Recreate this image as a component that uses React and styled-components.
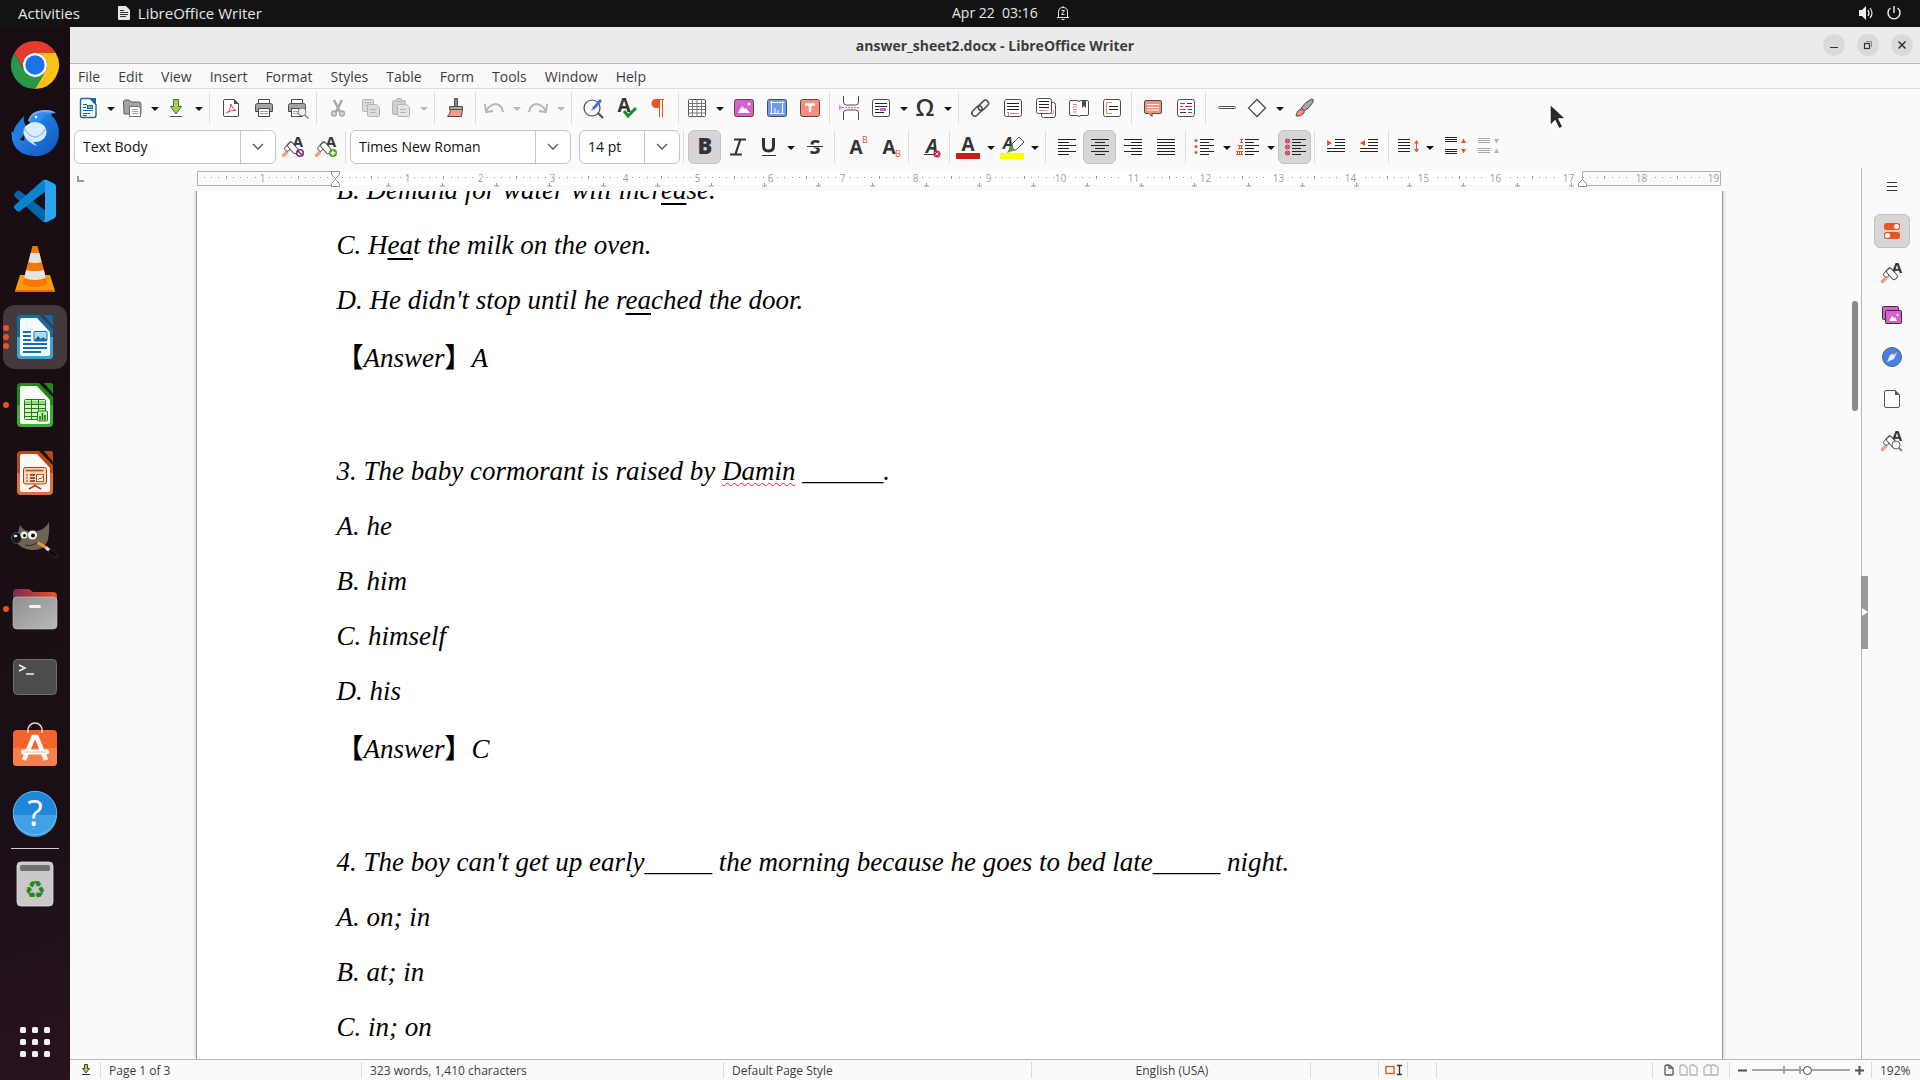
import React, { useState } from "react";
import styled, { createGlobalStyle } from "styled-components";

const ink = "#4d4d4d";
const orange = "#e95420";
const salmon = "#fc9c8c";

export default function App() {
  return (
    <>
      <GlobalStyle />
      <Desktop>
        <TopBar />
        <Workspace>
          <Dock />
          <WriterWindow />
        </Workspace>
        <Pointer viewBox="0 0 20 28">
          <path d="M1 1v22l5-5 4 8 4-2-4-8h7z" fill="#2b2b2b" stroke="#fff" strokeWidth="1.4" />
        </Pointer>
      </Desktop>
    </>
  );
}

function TopBar() {
  return (
    <TopBarWrapper>
      <TopLeft>
        <TopButton>Activities</TopButton>
        <TopButton>
          <svg width="12" height="14" viewBox="0 0 12 14">
            <path d="M0 1q0-1 1-1h7l4 4v9q0 1-1 1H1q-1 0-1-1z" fill="#e6e6e6" />
            <path d="M2 4.500h4M2 6.500h8M2 8.500h8M2 10.500h6" stroke="#333" />
          </svg>
          LibreOffice Writer
        </TopButton>
      </TopLeft>
      <Clock>
        <span>Apr 22&nbsp; 03:16</span>
        <svg width="14" height="16" viewBox="0 0 14 16" fill="none" stroke="#e6e6e6">
          <path d="M1 12.500h12M2.500 12V7q0-4.500 4.500-4.500T11.500 7v5M5.500 14.500h3M7 1v1" />
          <path d="M5.500 5.500h3l-3 4h3" />
        </svg>
      </Clock>
      <TopRight>
        <svg width="16" height="16" viewBox="0 0 16 16">
          <path d="M1 5h3l4-4v14l-4-4H1z" fill="#f2f2f2" />
          <path d="M10 5q2 3 0 6M12 3q4 5 0 10" stroke="#f2f2f2" fill="none" strokeWidth="1.200" />
        </svg>
        <svg width="16" height="16" viewBox="0 0 16 16" fill="none" stroke="#f2f2f2" strokeWidth="1.400">
          <path d="M8 1v7M4.500 3a6 6 0 1 0 7 0" />
        </svg>
      </TopRight>
    </TopBarWrapper>
  );
}

/* ---------- dock ---------- */

const DocIcon = ({ id, dark, light, children }) => (
  <svg width="48" height="48" viewBox="0 0 48 48">
    <defs>
      <linearGradient id={id} x1="0" y1="0" x2="0" y2="1">
        <stop offset="0" stopColor={dark} />
        <stop offset="0.5" stopColor={dark} />
        <stop offset="0.5" stopColor={light} />
        <stop offset="1" stopColor={light} />
      </linearGradient>
    </defs>
    <path d="M10 2h18l14 14v26q0 4-4 4H10q-4 0-4-4V6q0-4 4-4z" fill={`url(#${id})`} />
    <path d="M11 5h15l13 14v22q0 2-2 2H11q-2 0-2-2V7q0-2 2-2z" fill="#fafafa" />
    <path d="M33 2h7q2 0 2 2v9z" fill={dark} />
    {children}
  </svg>
);

const dockIcons = {
  chrome: (
    <svg width="48" height="48" viewBox="0 0 48 48">
      <path d="M24 12h20.800A24 24 0 0 0 3.200 12l10.400 18A12 12 0 0 1 24 12" fill="#e33b2e" />
      <path d="M44.800 12A24 24 0 0 1 24 48l10.400-18A12 12 0 0 0 24 12z" fill="#fbc116" />
      <path d="M3.200 12A24 24 0 0 0 24 48l10.400-18a12 12 0 0 1-20.800 0z" fill="#279847" />
      <circle cx="24" cy="24" r="12" fill="#fff" />
      <circle cx="24" cy="24" r="9.700" fill="#1a73e8" />
    </svg>
  ),
  thunderbird: (
    <svg width="48" height="48" viewBox="0 0 48 48">
      <defs>
        <linearGradient id="tb" x1="0" y1="0" x2="1" y2="1">
          <stop offset="0" stopColor="#2f9bf5" />
          <stop offset="0.6" stopColor="#1b6fd8" />
          <stop offset="1" stopColor="#1552b0" />
        </linearGradient>
      </defs>
      <path d="M0 24q1-2 2 1 1-7 5-11 3-4 6-7-1 4 1 8l3 6-10 12z" fill="#1f7ce0" />
      <path d="M17 12Q20 1 35 1q6 0 10 3-3 0-5 2 8 7 8 18 0 10-7 17-8 7-18 6Q8 46 3 36 0 30 1 22q5 9 12 10 0-12 9-17-2-2-5-3z" fill="url(#tb)" />
      <path d="M17 12Q20 1 35 1q6 0 10 3-11-2-16 5-4 4-12 3z" fill="#8ba4f5" />
      <path d="M19 11q3-8 15-8 4 0 6 2-6 0-9 5-3 5-12 4z" fill="#2b91f0" />
      <circle cx="25" cy="8" r="1.300" fill="#fff" />
      <ellipse cx="24" cy="23" rx="11.500" ry="10" fill="#d9efff" />
      <path d="M13 19q5 9 11 9t11-9" fill="none" stroke="#8fc3f1" strokeWidth="1.400" />
      <path d="M13 26q4 9 14 11-4-2-4-4 9 1 12-8-4 8-11 7-6 0-11-6z" fill="#bfe0fb" />
    </svg>
  ),
  code: (
    <svg width="48" height="48" viewBox="0 0 48 48">
      <path d="M3 17l3-3q1.500-1 3 0l26 20v11q-2 1-4-1L3.500 19.500Q2.500 18 3 17z" fill="#0065a9" />
      <path d="M3 31l3 3q1.500 1 3 0l26-20V3q-2-1-4 1L3.500 28.500Q2.500 30 3 31z" fill="#0a84ce" />
      <path d="M31.500 43.500Q34 46 36 45l7-3.500q2-1 2-3v-29q0-2-2-3L36 3q-2-1-4.500 1.500Q34 3 34 6.500v35q0 3.500-2.500 2z" fill="#27a5f0" />
    </svg>
  ),
  vlc: (
    <svg width="48" height="48" viewBox="0 0 48 48">
      <path d="M9 30h30l5 16H4z" fill="#fb9a0c" />
      <path d="M4 45h40v2H4z" fill="#e06a00" />
      <path d="M21.500 1h5l10 37q-2 4-12.500 4T11.500 38z" fill="#f57900" />
      <path d="M19.700 8h8.600l2.200 9q-6.500 2-13 0z" fill="#e3e5e5" />
      <path d="M15.300 25q8.700 2.500 17.400 0l2.200 8q-10.900 4-21.800 0z" fill="#e3e5e5" />
    </svg>
  ),
  writer: (
    <DocIcon id="dw" dark="#0f6aa5" light="#3fa3da">
      <path d="M12 19h8M12 23h8M12 27h8M12 31h24M12 35h24M12 39h18" stroke="#0f73b5" strokeWidth="1.800" />
      <rect x="23" y="18.500" width="13" height="9.500" rx="1" fill="#a9dcf7" stroke="#0f73b5" />
      <path d="M23 28l4-5 3 3 2-2 4 3v1z" fill="#0f6aa5" />
    </DocIcon>
  ),
  calc: (
    <DocIcon id="dc" dark="#1f8b12" light="#3cad2d">
      <rect x="13.500" y="18.500" width="21" height="20" rx="1" fill="#d2f3c4" stroke="#1f7d12" />
      <path d="M14 20h20v3H14z" fill="#8fdc78" />
      <path d="M13 23.500h22M13 27.500h22M13 31.500h22M13 35.500h22M20.500 18v21M27.500 18v21" stroke="#1f7d12" />
      <rect x="26.500" y="30" width="10" height="10" rx="1" fill="#c4efb2" stroke="#1f7d12" />
      <path d="M29 39v-4M31.500 39v-7M34 39v-5" stroke="#1f7d12" strokeWidth="1.600" />
    </DocIcon>
  ),
  impress: (
    <DocIcon id="di" dark="#b94a10" light="#e0703a">
      <rect x="12.500" y="18.500" width="23" height="16.500" rx="2" fill="#f8d6c3" stroke="#a8410d" />
      <path d="M14.500 21.500h18" stroke="#c9521a" strokeWidth="1.800" />
      <path d="M15 26h2M15 29h2M15 32h2" stroke="#e0703a" strokeWidth="1.600" />
      <path d="M19 26h5M19 29h5M19 32h5" stroke="#7d2f08" strokeWidth="1.600" />
      <rect x="25.500" y="25.500" width="7" height="7" fill="#fff" stroke="#c9521a" />
      <path d="M27 31l2-2 1 1 2-3" stroke="#c9521a" fill="none" />
      <path d="M24 35v2M18 40l5-3h2l5 3" stroke="#a8410d" strokeWidth="1.500" fill="none" />
    </DocIcon>
  ),
  gimp: (
    <svg width="48" height="48" viewBox="0 0 48 48">
      <path d="M9 8q4 7 12 7 13-1 17-10 1 9-1 18-4 11-17 10Q9 32 5 24z" fill="#6b6457" />
      <ellipse cx="5.500" cy="21" rx="5" ry="5.500" fill="#16191c" stroke="#59626a" strokeWidth="0.700" />
      <ellipse cx="4.500" cy="19" rx="1.800" ry="1.300" fill="#e8f0f2" />
      <circle cx="13" cy="18" r="3.500" fill="#e8e8e8" />
      <circle cx="21.500" cy="18" r="4.500" fill="#f2f2f2" />
      <circle cx="13.500" cy="18.500" r="1.500" fill="#111" />
      <circle cx="22" cy="18.500" r="2" fill="#111" />
      <path d="M14 28q7 2 13-3" stroke="#2d2a25" fill="none" />
      <path d="M27 24l10 6-1.500 2.500L26 27z" fill="#f0922b" />
      <path d="M36 29.500l4 3-2 2.500-4-3z" fill="#d6dadb" />
      <path d="M39 32q7 3 8 9-7-1-10-6z" fill="#0a0a0a" stroke="#444" strokeWidth="0.500" />
    </svg>
  ),
  files: (
    <svg width="48" height="48" viewBox="0 0 48 48">
      <defs>
        <linearGradient id="ff" x1="0" x2="1">
          <stop offset="0" stopColor="#7d2954" />
          <stop offset="1" stopColor="#ea5322" />
        </linearGradient>
        <linearGradient id="fg" x1="0" y1="0" x2="1" y2="1">
          <stop offset="0" stopColor="#8f8f8f" />
          <stop offset="1" stopColor="#b9b9b9" />
        </linearGradient>
      </defs>
      <path d="M2 8q0-4 4-4h12l4 3h20q4 0 4 4v14H2z" fill="url(#ff)" />
      <rect x="2" y="12" width="44" height="32" rx="4" fill="url(#fg)" stroke="#c9c9c9" strokeWidth="0.600" />
      <rect x="18" y="20" width="12" height="3" rx="1.500" fill="#f4f4f4" />
    </svg>
  ),
  terminal: (
    <svg width="48" height="48" viewBox="0 0 48 48">
      <rect x="2.500" y="6.500" width="43" height="35" rx="4" fill="#4c4c4c" stroke="#707070" />
      <path d="M8 12l6 3-6 3M15 21h8" stroke="#f2f2f2" strokeWidth="1.500" fill="none" />
    </svg>
  ),
  store: (
    <svg width="48" height="48" viewBox="0 0 48 48">
      <rect x="2" y="9" width="44" height="36" rx="4" fill="#f4642d" />
      <path d="M2 27h44v14q0 4-4 4H6q-4 0-4-4z" fill="#f58049" />
      <path d="M17 12V9a7 7 0 0 1 14 0v3" fill="none" stroke="#f6d9a8" strokeWidth="1.600" />
      <path d="M13 39l9.500-23h3L35 39" stroke="#fff" strokeWidth="4.500" fill="none" />
      <path d="M12.500 31h23" stroke="#fff" strokeWidth="5" strokeLinecap="round" />
      <path d="M13 31h22" stroke="#f9b598" strokeWidth="1" />
    </svg>
  ),
  help: (
    <svg width="48" height="48" viewBox="0 0 48 48">
      <circle cx="24" cy="24" r="22" fill="#1f86d9" />
      <path d="M2 26a22 22 0 0 0 44 0z" fill="#42a1e4" />
      <circle cx="24" cy="24" r="21.700" fill="none" stroke="#7dc1f0" strokeWidth="0.800" />
      <text x="24" y="37" textAnchor="middle" fontFamily="Open Sans, sans-serif" fontSize="36" fill="#fff">?</text>
    </svg>
  ),
  trash: (
    <svg width="48" height="48" viewBox="0 0 48 48">
      <rect x="6" y="2" width="36" height="44" rx="4" fill="#c9c9c9" stroke="#e2e2e2" strokeWidth="0.800" />
      <rect x="9" y="5" width="30" height="6" rx="2" fill="#6f6f6f" />
      <text x="24" y="38" textAnchor="middle" fontFamily="DejaVu Sans, sans-serif" fontSize="24" fill="#228a1c">♻</text>
    </svg>
  ),
};

const dockItems = [
  { name: "Google Chrome", icon: "chrome" },
  { name: "Thunderbird Mail", icon: "thunderbird" },
  { name: "Visual Studio Code", icon: "code" },
  { name: "VLC media player", icon: "vlc" },
  { name: "LibreOffice Writer", icon: "writer", windows: 3, active: true },
  { name: "LibreOffice Calc", icon: "calc", windows: 1 },
  { name: "LibreOffice Impress", icon: "impress" },
  { name: "GIMP", icon: "gimp" },
  { name: "Files", icon: "files", windows: 1 },
  { name: "Terminal", icon: "terminal" },
  { name: "Software", icon: "store" },
  { name: "Help", icon: "help" },
];

function Dock() {
  return (
    <DockWrapper>
      {dockItems.map((item) => (
        <DockButton key={item.name} aria-label={item.name} $active={item.active}>
          {item.windows && (
            <Dots>
              {Array.from({ length: item.windows }, (_, i) => (
                <i key={i} />
              ))}
            </Dots>
          )}
          {dockIcons[item.icon]}
        </DockButton>
      ))}
      <DockLine />
      <DockButton aria-label="Trash">{dockIcons.trash}</DockButton>
      <AppsButton aria-label="Show Applications">
        <svg width="48" height="48" viewBox="0 0 48 48" fill="#f2f2f2">
          {[9, 21, 33].map((y) =>
            [9, 21, 33].map((x) => <rect key={x + "-" + y} x={x} y={y} width="6" height="6" rx="1.500" />)
          )}
        </svg>
      </AppsButton>
    </DockWrapper>
  );
}

/* ---------- toolbar icons, all on a 24px grid ---------- */

const Glyph = ({ x = 12, y = 19, size = 20, fill = "#333", family = "Open Sans", weight = 700, italic, children }) => (
  <text
    x={x}
    y={y}
    textAnchor="middle"
    fontFamily={`${family}, sans-serif`}
    fontSize={size}
    fontWeight={weight}
    fontStyle={italic ? "italic" : "normal"}
    fill={fill}
  >
    {children}
  </text>
);

const Brush = () => (
  <>
    <Glyph x={17} y={12} size={15}>A</Glyph>
    <path d="M2.500 20.500l3-3" stroke={salmon} strokeWidth="3.500" strokeLinecap="round" />
    <rect x="3" y="9" width="10" height="5" rx="1.500" fill="#fff" stroke="#666" transform="rotate(-50 8 11.500)" />
    <rect x="6" y="10" width="12" height="6" rx="2" fill="#fff" stroke={ink} transform="rotate(48 12 13)" />
  </>
);

const box = <rect x="3.500" y="3.500" width="17" height="17" rx="2" fill="#fff" stroke={ink} />;

const Printer = () => (
  <>
    <path d="M6.500 8V3.500h11V8" fill="#fff" stroke={ink} />
    <path d="M3.500 9.500q0-2 2-2h13q2 0 2 2v6h-17z" fill="#a6a6a6" stroke={ink} />
    <rect x="6.500" y="12.500" width="11" height="8" fill="#fff" stroke={ink} />
    <path d="M8 15.500h8M8 17.500h8" stroke="#9a9af0" />
  </>
);

const icons = {
  newDoc: (
    <>
      <path d="M4.500 4.500q0-2 2-2H14l6 6V19q0 2.500-2 2.500H6.500q-2 0-2-2z" fill="#fff" stroke="#0d6ba5" strokeWidth="1.400" />
      <path d="M13 2h7v7z" fill="#0d6ba5" />
      <path d="M7 8.500h4M7 11.500h3M7 14.500h10M7 17.500h7M7 19.500h4" stroke="#0d6ba5" />
      <rect x="11.500" y="9.500" width="5" height="3" fill="#6fb7e0" stroke="#0d6ba5" />
    </>
  ),
  open: (
    <>
      <path d="M3.500 6q0-2 2-2H9l2 2h8q2 0 2 2v10h-17z" fill="#a3a3a3" stroke="#606060" />
      <path d="M9.500 10.500h9l2 2v8h-11z" fill="#fff" stroke="#707070" />
      <path d="M12 13.500h6M12 15.500h6M12 17.500h6" stroke="#9a9af0" />
    </>
  ),
  save: (
    <>
      <path d="M9.500 3.500h5v7h3L12 18l-5.500-7.500h3z" fill="#9fd24a" stroke="#5a6b3a" />
      <path d="M6 20.500h12" stroke={ink} />
    </>
  ),
  pdf: (
    <>
      <path d="M4.500 5q0-1.500 1.500-1.500h9L19.500 8v11q0 1.500-1.500 1.500H6q-1.500 0-1.500-1.500z" fill="#fff" stroke={ink} />
      <path d="M15 3l5 5h-5z" fill={ink} />
      <path d="M7.500 17Q11 15 12 8q1 5 5 6.500-5-1-9.500 2.500z" fill="none" stroke="#e2405c" />
    </>
  ),
  print: <Printer />,
  preview: (
    <>
      <Printer />
      <circle cx="17" cy="16" r="4" fill="#eee" stroke="#808080" />
      <path d="M20 19l3.500 3.500" stroke="#808080" strokeWidth="1.500" />
    </>
  ),
  cut: (
    <g fill="#d0d0d0" stroke="#a8a8a8" strokeWidth="1.300">
      <path d="M8 4l6 12M16 4l-6 12" strokeWidth="2.500" />
      <circle cx="8" cy="17.500" r="2.500" />
      <circle cx="16" cy="17.500" r="2.500" />
    </g>
  ),
  copy: (
    <g fill="#dcdcdc" stroke="#b4b4b4">
      <rect x="3.500" y="3.500" width="11" height="12" rx="1.500" />
      <path d="M6 6.500h6M6 9.500h3" />
      <path d="M8.500 9.500q0-1 1-1h8l3 3v8q0 1-1 1h-10q-1 0-1-1z" />
      <path d="M11 13.500h6M11 16.500h6" />
    </g>
  ),
  paste: (
    <g fill="#cfcfcf" stroke="#b4b4b4">
      <rect x="3.500" y="4.500" width="13" height="14" rx="1.500" />
      <rect x="7.500" y="2.500" width="5" height="3" rx="1" />
      <path d="M8.500 9.500q0-1 1-1h8l3 3v8q0 1-1 1h-10q-1 0-1-1z" fill="#e4e4e4" />
      <path d="M11 13.500h6M11 16.500h6" />
    </g>
  ),
  clone: (
    <>
      <path d="M10.500 2.500h3v8h-3z" fill="#8a8a8a" stroke={ink} />
      <path d="M5.500 10.500h13v3h-13z" fill="#a6a6a6" stroke={ink} />
      <path d="M6.500 13.500h12l-1 7h-14q3-3 3-7z" fill={salmon} stroke={ink} />
    </>
  ),
  undo: <path d="M3 8l1 8 7-1M4 15q4-7 10-7 6 1 7 8" fill="none" stroke="#b8b8b8" strokeWidth="2" />,
  redo: <path d="M21 8l-1 8-7-1M20 15q-4-7-10-7-6 1-7 8" fill="none" stroke="#b8b8b8" strokeWidth="2" />,
  find: (
    <>
      <circle cx="11" cy="12" r="8" fill="#fafafa" stroke={ink} strokeWidth="1.200" />
      <path d="M17 17l5 5" stroke={ink} strokeWidth="2" />
      <path d="M11 12l8-9 2 2-8 9z" fill="#3a6ee8" />
      <path d="M11 12l2 2-3.500 1.500z" fill="#f0b070" />
    </>
  ),
  spell: (
    <>
      <Glyph x={10} y={16} size={19}>A</Glyph>
      <path d="M10 15l4 5 8-8" fill="none" stroke="#149128" strokeWidth="3" />
    </>
  ),
  pilcrow: (
    <>
      <path d="M12 3H9a4.500 4.500 0 0 0 0 9h3z" fill={orange} />
      <path d="M12.500 3v18M15.500 3v18M11 3.500h6" stroke={orange} />
    </>
  ),
  table: (
    <>
      <rect x="3.500" y="3.500" width="17" height="17" rx="1" fill="#fff" stroke={ink} />
      <path d="M3 7.500h18M3 10.500h18M3 13.500h18M3 17h18M7.500 3v18M12 3v18M16.500 3v18" stroke="#777" />
    </>
  ),
  image: (
    <>
      <rect x="2.500" y="3.500" width="19" height="17" rx="2" fill="#d95fca" stroke={ink} />
      <path d="M6 17l4-7 3 3 1-1 4 5z" fill="#fff" />
      <circle cx="17" cy="8" r="1.500" fill="#fff" />
    </>
  ),
  chart: (
    <>
      <rect x="2.500" y="3.500" width="19" height="17" rx="2" fill="#6f9bf0" stroke={ink} />
      <path d="M5 6.500h14M6.500 5v13M17.500 5v13M5 17.500h14M10 17v-5M13 17v-3" stroke="#fff" />
    </>
  ),
  textBox: (
    <>
      <rect x="2.500" y="3.500" width="19" height="17" rx="2" fill="#fc8d7e" stroke={ink} />
      <path d="M7 8.500h10M12 8v8" stroke="#fff" strokeWidth="2.400" />
    </>
  ),
  pageBreak: (
    <>
      <path d="M4.500 0v6q0 3 3 3h9q3 0 3-3V0M4.500 24v-7q0-3 3-3h9q3 0 3 3v7" fill="#fff" stroke={ink} />
      <path d="M3 11.500h18" stroke="#d95fca" strokeDasharray="2 1" />
      <path d="M0 8.500l3 3-3 3z" fill="#f07ad0" />
    </>
  ),
  field: (
    <>
      {box}
      <path d="M6 7.500h12M6 10.500h12M6 13.500h4M6 16.500h9" stroke="#222" />
      <rect x="11" y="12" width="6" height="3" fill="#d95fca" />
    </>
  ),
  omega: <Glyph y={20} size={24} weight={600}>Ω</Glyph>,
  link: (
    <g fill="none" stroke={ink} strokeWidth="1.500">
      <rect x="9" y="6.500" width="12" height="6" rx="3" transform="rotate(-45 15 9)" />
      <rect x="3" y="12" width="12" height="6" rx="3" transform="rotate(-45 9 15)" />
    </g>
  ),
  footnote: (
    <>
      {box}
      <path d="M6 7.500h12M6 10.500h12M6 13.500h12" stroke="#222" />
      <path d="M9 17.500h9M6 16.500h2M7.500 16v4" stroke="#f0826e" />
    </>
  ),
  endnote: (
    <>
      <rect x="7.500" y="6.500" width="14" height="15" rx="2" fill="#fff" stroke={ink} />
      <path d="M17 17.500h2.500v-3" stroke="#f0826e" fill="none" />
      <rect x="2.500" y="2.500" width="15" height="15" rx="2" fill="#fff" stroke={ink} />
      <path d="M5 5.500h10M5 8.500h10M5 11.500h10" stroke="#222" />
      <path d="M5 14.500h8" stroke="#f0826e" />
    </>
  ),
  bookmark: (
    <>
      <path d="M2.500 6q0-1.500 1.500-1.500h6l2 1 2-1h6q1.500 0 1.500 1.500v12q0 1.500-1.500 1.500h-6l-2 1-2-1H4q-1.500 0-1.500-1.500z" fill="#fff" stroke={ink} />
      <path d="M6 8.500h4M6 11h4M6 13.500h4M6 16h4" stroke="#f0826e" />
      <path d="M15 4h4v8l-2-2-2 2z" fill={ink} />
    </>
  ),
  crossRef: (
    <>
      {box}
      <path d="M12 6.500H6.500v11H12" fill="none" stroke="#f0826e" />
      <path d="M9 10.500h9M9 13.500h9" stroke="#222" />
    </>
  ),
  comment: (
    <>
      <path d="M3.500 6q0-1.500 1.500-1.500h14q1.500 0 1.500 1.500v10q0 1.500-1.500 1.500h-8v3l-3-3H5q-1.500 0-1.500-1.500z" fill="#fc8d7e" stroke={ink} />
      <path d="M6 8.500h12M6 11.500h12M6 14h12" stroke="#fff" />
    </>
  ),
  track: (
    <>
      {box}
      <path d="M6 7.500h5M6 10.500h3M11 10.500h7M6 13.500h6M14 16.500h4" stroke="#c8315a" />
      <path d="M13 7.500h5M14 13.500h4M6 16.500h6" stroke="#333" />
    </>
  ),
  line: <rect x="3.500" y="10.500" width="17" height="2" rx="1" fill="#fff" stroke={ink} />,
  shape: <path d="M12 3.500L20.500 12 12 20.500 3.500 12z" fill="#fff" stroke={ink} strokeWidth="1.300" />,
  draw: (
    <>
      <path d="M20 3q2 0 1 3-3 6-9 9l-3-3q5-7 11-9z" fill="#a6a6a6" stroke={ink} />
      <path d="M9 13q4 0 3 4-3 4-8 3 1-6 5-7z" fill="#fc8d7e" stroke={ink} />
    </>
  ),
  updateStyle: (
    <>
      <Brush />
      <circle cx="19" cy="18" r="3.300" fill="#fff" stroke="#7b2a78" strokeWidth="1.600" />
      <path d="M17 16l4 4" stroke="#7b2a78" strokeWidth="1.600" />
    </>
  ),
  newStyle: (
    <>
      <Brush />
      <circle cx="19" cy="18" r="4" fill="#43a51c" />
      <path d="M16.500 18h5M19 15.500v5" stroke="#fff" strokeWidth="1.500" />
    </>
  ),
  bold: <Glyph size={22} weight={800}>B</Glyph>,
  italic: <path d="M8 4.500h12M4 19.500h12M14.500 4l-5 15" stroke="#333" strokeWidth="2.200" fill="none" />,
  underline: (
    <>
      <path d="M7.500 3v8q0 5 5 5t5-5V3" fill="none" stroke="#333" strokeWidth="3" />
      <path d="M6 20.500h14" stroke="#333" />
    </>
  ),
  strike: (
    <>
      <Glyph y={19} size={20}>S</Glyph>
      <path d="M4 11h16" stroke="#fafafa" strokeWidth="3" />
      <path d="M4 11.500h16" stroke="#333" />
    </>
  ),
  superscript: (
    <>
      <Glyph x={12} y={19} size={19}>A</Glyph>
      <Glyph x={21} y={8} size={9} fill={orange} weight={400}>B</Glyph>
    </>
  ),
  subscript: (
    <>
      <Glyph x={12} y={19} size={19}>A</Glyph>
      <Glyph x={21} y={22} size={9} fill={orange} weight={400}>B</Glyph>
    </>
  ),
  clear: (
    <>
      <Glyph x={14} y={18} size={19} italic>A</Glyph>
      <path d="M6 19.500h10" stroke="#333" />
      <circle cx="19" cy="19" r="3.500" fill="#d0213f" />
      <path d="M17.500 17.500l3 3M20.500 17.500l-3 3" stroke="#fff" />
    </>
  ),
  fontColor: (
    <>
      <Glyph y={16} size={19}>A</Glyph>
      <path d="M0 18h24v6H0z" fill="#c9211e" />
    </>
  ),
  highlight: (
    <>
      <Glyph x={8} y={14} size={16} italic>A</Glyph>
      <path d="M12 9l7-7 5 5-8 8h-3z" fill="#fff" stroke={ink} />
      <path d="M11 10l4 5-8 3z" fill="#5aa02c" />
      <path d="M0 18h24v6H0z" fill="#ff0" />
    </>
  ),
  left: <path d="M3 4.500h18M3 7.500h11M3 10.500h18M3 13.500h11M3 16.500h18M3 19.500h11" stroke="#222" />,
  center: <path d="M3 4.500h18M7 7.500h10M3 10.500h18M7 13.500h10M3 16.500h18M7 19.500h10" stroke="#222" />,
  right: <path d="M3 4.500h18M10 7.500h11M3 10.500h18M10 13.500h11M3 16.500h18M10 19.500h11" stroke="#222" />,
  justify: <path d="M3 4.500h18M3 7.500h18M3 10.500h18M3 13.500h18M3 16.500h18M3 19.500h18" stroke="#222" />,
  bullets: (
    <>
      <path d="M8 4.500h14M8 7.500h9M8 10.500h14M8 13.500h9M8 16.500h14M8 19.500h9" stroke="#222" />
      <g fill={orange}>
        <circle cx="4" cy="5.500" r="1.500" />
        <circle cx="4" cy="11.500" r="1.500" />
        <circle cx="4" cy="17.500" r="1.500" />
      </g>
    </>
  ),
  numbers: (
    <>
      <path d="M9 4.500h14M9 7.500h9M9 10.500h14M9 13.500h9M9 16.500h14M9 19.500h9" stroke="#222" />
      <path d="M4 4.500h3M5.500 4v4M4 7.500h3M2 10.500h5M3.500 10v4M5.500 10v4M2 13.500h5M0 16.500h7M1.500 16v4M3.500 16v4M5.500 16v4M0 19.500h7" stroke={orange} />
    </>
  ),
  noList: (
    <>
      <path d="M9 4.500h14M9 7.500h9M9 10.500h14M9 13.500h9M9 16.500h14M9 19.500h9" stroke="#222" />
      {[6, 12, 18].map((y) => (
        <g key={y} stroke="#c8213f" fill="#f0d5da">
          <circle cx="4.500" cy={y} r="2" />
          <path d={`M3 ${y - 1.5}l3 3M6 ${y - 1.5}l-3 3`} />
        </g>
      ))}
    </>
  ),
  indent: (
    <>
      <path d="M11 4.500h10M11 7.500h10M11 10.500h10M3 13.500h18M3 16.500h18" stroke="#222" />
      <path d="M3 5l5 3-5 3z" fill={orange} />
    </>
  ),
  outdent: (
    <>
      <path d="M11 4.500h10M11 7.500h10M11 10.500h10M3 13.500h18M3 16.500h18" stroke="#222" />
      <path d="M8 5L3 8l5 3z" fill={orange} />
    </>
  ),
  lineSpacing: (
    <>
      <path d="M3 4.500h12M3 7.500h12M3 10.500h12M3 13.500h12M3 16.500h12" stroke="#222" />
      <path d="M21.500 6v10" stroke={orange} />
      <path d="M19 8.500L21.500 5 24 8.500zM19 14l2.500 3.500L24 14z" fill={orange} />
    </>
  ),
  moreSpacing: (
    <>
      <path d="M3 2.500h12M3 4.500h12M3 6.500h12M3 14.500h12M3 16.500h12M3 18.500h12" stroke="#222" />
      <path d="M19 8l2.500-4.500L24 8zM19 14l2.500 4.500L24 14z" fill={orange} />
    </>
  ),
  lessSpacing: (
    <>
      <path d="M3 3.500h12M3 5.500h12M3 7.500h12M3 13.500h12M3 15.500h12M3 17.500h12" stroke="#a8a8a8" />
      <path d="M19 4l2.500 4.500L24 4zM19 18l2.500-4.500L24 18z" fill="#b4b4b4" />
    </>
  ),
  menu: <path d="M7 7.500h10M7 11.500h10M7 15.500h10" stroke="#333" />,
  properties: (
    <>
      <rect x="4" y="4" width="16" height="7" rx="2.500" fill={orange} />
      <rect x="4" y="13" width="16" height="7" rx="2.500" fill={orange} />
      <circle cx="16.500" cy="7.500" r="2.500" fill="#fff" />
      <circle cx="7.500" cy="16.500" r="2.500" fill="#fff" />
    </>
  ),
  styles: <Brush />,
  gallery: (
    <>
      <rect x="2.500" y="3.500" width="16" height="13" rx="1" fill="#d95fca" stroke="#333" />
      <rect x="5.500" y="7.500" width="16" height="13" rx="1" fill="#d95fca" stroke="#333" />
      <path d="M9 18l3-5 2 2 1-1 2 4z" fill="#fff" />
      <circle cx="17.500" cy="12" r="1.200" fill="#fff" />
    </>
  ),
  navigator: (
    <>
      <circle cx="12" cy="12" r="9.500" fill="#4a7fe8" stroke="#55606e" />
      <path d="M17 7l-3 7-7 3 3-7z" fill="#e4ebf5" />
      <path d="M17 7l-3 3-1-1z" fill="#e2304a" />
    </>
  ),
  page: (
    <>
      <path d="M4.500 5q0-1.500 1.500-1.500h9L19.500 8v11q0 1.500-1.500 1.500H6q-1.500 0-1.500-1.500z" fill="#fff" stroke="#555" />
      <path d="M15 3l5 5h-5z" fill="#555" />
    </>
  ),
  inspector: (
    <>
      <Brush />
      <circle cx="16" cy="16" r="4" fill="#f4f4f4" stroke="#666" />
      <path d="M19 19l3 3" stroke="#666" strokeWidth="1.500" />
    </>
  ),
};

const Icon = ({ name }) => (
  <svg width="24" height="24" viewBox="0 0 24 24" fill="none">
    {icons[name]}
  </svg>
);

const Tool = ({ icon, label, menu, on, disabled }) =>
  menu ? (
    <SplitTool>
      <ToolButton $narrow aria-label={label} disabled={disabled}>
        <Icon name={icon} />
      </ToolButton>
      <ArrowButton aria-label={label + " options"} disabled={disabled} />
    </SplitTool>
  ) : (
    <ToolButton aria-label={label} aria-pressed={on} $on={on} disabled={disabled}>
      <Icon name={icon} />
    </ToolButton>
  );

const Combo = ({ label, value, width }) => (
  <ComboBox $width={width}>
    <select aria-label={label} defaultValue={value}>
      <option>{value}</option>
    </select>
    <ComboArrow>
      <svg width="12" height="8" viewBox="0 0 12 8" fill="none" stroke="#555" strokeWidth="1.300">
        <path d="M1 1l5 5 5-5" />
      </svg>
    </ComboArrow>
  </ComboBox>
);

/* null marks a separator */
const standardTools = [
  { icon: "newDoc", label: "New", menu: true },
  { icon: "open", label: "Open", menu: true },
  { icon: "save", label: "Save", menu: true },
  null,
  { icon: "pdf", label: "Export as PDF" },
  { icon: "print", label: "Print" },
  { icon: "preview", label: "Print preview" },
  null,
  { icon: "cut", label: "Cut", disabled: true },
  { icon: "copy", label: "Copy", disabled: true },
  { icon: "paste", label: "Paste", menu: true, disabled: true },
  null,
  { icon: "clone", label: "Clone formatting" },
  null,
  { icon: "undo", label: "Undo", menu: true, disabled: true },
  { icon: "redo", label: "Redo", menu: true, disabled: true },
  null,
  { icon: "find", label: "Find and replace" },
  { icon: "spell", label: "Spelling" },
  { icon: "pilcrow", label: "Formatting marks" },
  null,
  { icon: "table", label: "Insert table", menu: true },
  { icon: "image", label: "Insert image" },
  { icon: "chart", label: "Insert chart" },
  { icon: "textBox", label: "Insert text box" },
  null,
  { icon: "pageBreak", label: "Insert page break" },
  { icon: "field", label: "Insert field", menu: true },
  { icon: "omega", label: "Special character", menu: true },
  null,
  { icon: "link", label: "Insert hyperlink" },
  { icon: "footnote", label: "Insert footnote" },
  { icon: "endnote", label: "Insert endnote" },
  { icon: "bookmark", label: "Insert bookmark" },
  { icon: "crossRef", label: "Insert cross-reference" },
  null,
  { icon: "comment", label: "Insert comment" },
  { icon: "track", label: "Track changes" },
  null,
  { icon: "line", label: "Insert line" },
  { icon: "shape", label: "Basic shapes", menu: true },
  { icon: "draw", label: "Draw functions" },
];

const formatTools = [
  null,
  { icon: "bold", label: "Bold", on: true },
  { icon: "italic", label: "Italic" },
  { icon: "underline", label: "Underline", menu: true },
  { icon: "strike", label: "Strikethrough" },
  null,
  { icon: "superscript", label: "Superscript" },
  { icon: "subscript", label: "Subscript" },
  null,
  { icon: "clear", label: "Clear formatting" },
  null,
  { icon: "fontColor", label: "Font color", menu: true },
  { icon: "highlight", label: "Highlighting", menu: true },
  null,
  { icon: "left", label: "Align left" },
  { icon: "center", label: "Align center", on: true },
  { icon: "right", label: "Align right" },
  { icon: "justify", label: "Justified" },
  null,
  { icon: "bullets", label: "Bulleted list", menu: true },
  { icon: "numbers", label: "Numbered list", menu: true },
  { icon: "noList", label: "No list", on: true },
  null,
  { icon: "indent", label: "Increase indent" },
  { icon: "outdent", label: "Decrease indent" },
  null,
  { icon: "lineSpacing", label: "Line spacing", menu: true },
  { icon: "moreSpacing", label: "Increase paragraph spacing" },
  { icon: "lessSpacing", label: "Decrease paragraph spacing", disabled: true },
];

const renderTools = (tools) =>
  tools.map((tool, i) => (tool ? <Tool key={i} {...tool} /> : <Separator key={i} />));

const menus = ["File", "Edit", "View", "Insert", "Format", "Styles", "Table", "Form", "Tools", "Window", "Help"];

const sideTabs = ["properties", "styles", "gallery", "navigator", "page", "inspector"];

function WriterWindow() {
  const [zoom, setZoom] = useState(57);

  return (
    <Window>
      <TitleBar>
        <Title>answer_sheet2.docx - LibreOffice Writer</Title>
        <WindowButtons>
          <button aria-label="Minimize">
            <svg width="10" height="10" viewBox="0 0 10 10">
              <path d="M1 7.500h8" stroke="#333" />
            </svg>
          </button>
          <button aria-label="Restore">
            <svg width="10" height="10" viewBox="0 0 10 10" fill="none">
              <path d="M3 1.500h5.500V7" stroke="#888" />
              <rect x="1.500" y="3.500" width="5" height="5" stroke="#333" strokeWidth="1.200" />
            </svg>
          </button>
          <button aria-label="Close">
            <svg width="10" height="10" viewBox="0 0 10 10">
              <path d="M1.500 1.500l7 7M8.500 1.500l-7 7" stroke="#333" strokeWidth="1.500" />
            </svg>
          </button>
        </WindowButtons>
      </TitleBar>
      <MenuBar>
        {menus.map((name) => (
          <button key={name}>{name}</button>
        ))}
      </MenuBar>
      <StandardBar>{renderTools(standardTools)}</StandardBar>
      <FormatBar>
        <Combo label="Paragraph style" value="Text Body" width={202} />
        <Tool icon="updateStyle" label="Update style" />
        <Tool icon="newStyle" label="New style" />
        <Separator />
        <Combo label="Font name" value="Times New Roman" width={221} />
        <ComboGap />
        <Combo label="Font size" value="14 pt" width={101} />
        {renderTools(formatTools)}
      </FormatBar>
      <Main>
        <Editor>
          <Ruler />
          <Canvas>
            <Sheet />
            <ScrollTrack>
              <ScrollThumb />
            </ScrollTrack>
          </Canvas>
        </Editor>
        <Sidebar>
          <SideHandle aria-label="Hide sidebar">
            <svg width="6" height="8" viewBox="0 0 6 8">
              <path d="M0 0l6 4-6 4z" fill="#fff" />
            </svg>
          </SideHandle>
          <SideMenu aria-label="Sidebar settings">
            <Icon name="menu" />
          </SideMenu>
          {sideTabs.map((name, i) => (
            <SideButton key={name} aria-label={name} $on={i === 0}>
              <Icon name={name} />
            </SideButton>
          ))}
        </Sidebar>
      </Main>
      <StatusBar>
        <StatusCell $center>
          <svg width="10" height="12" viewBox="0 0 10 12">
            <path d="M3.500.5h3v4h2L5 9 1.500 4.500h2z" fill="#9fd24a" stroke="#3f4a2a" />
            <path d="M1 10.500h8" stroke="#333" />
          </svg>
        </StatusCell>
        <StatusCell>Page 1 of 3</StatusCell>
        <StatusCell>323 words, 1,410 characters</StatusCell>
        <StatusCell>Default Page Style</StatusCell>
        <StatusCell $center>English (USA)</StatusCell>
        <StatusCell />
        <StatusCell $center>
          <svg width="18" height="12" viewBox="0 0 18 12" fill="none">
            <rect x="1" y="2.500" width="8" height="7" stroke={orange} strokeWidth="1.400" />
            <path d="M12 1.500h5M14.500 1v10M12 10.500h5" stroke="#333" strokeWidth="1.300" />
          </svg>
        </StatusCell>
        <StatusCell />
        <StatusCell />
        <StatusCell $center>
          <svg width="58" height="12" viewBox="0 0 58 12" fill="none" strokeWidth="1.300">
            <path d="M2 3q0-2 2-2h2l4 3v6q0 1-1 1H3q-1 0-1-1z" stroke="#555" />
            <path d="M6 1v3h4" stroke="#555" />
            <path d="M17 3q0-2 2-2h2l3 3v7h-6q-1 0-1-1zM27 3q0-2 2-2h2l3 3v7h-6q-1 0-1-1z" stroke="#b4b4b4" />
            <path d="M48 11h-6q-1 0-1-1V4l3-3h2q2 0 2 2zM48 11h6q1 0 1-1V4l-3-3h-2q-2 0-2 2z" stroke="#b4b4b4" />
          </svg>
        </StatusCell>
        <ZoomCell>
          <button aria-label="Zoom out">
            <svg width="9" height="9" viewBox="0 0 9 9">
              <path d="M0 4.500h9" stroke="#555" strokeWidth="2" />
            </svg>
          </button>
          <input aria-label="Zoom" type="range" value={zoom} onChange={(e) => setZoom(e.target.value)} />
          <button aria-label="Zoom in">
            <svg width="9" height="9" viewBox="0 0 9 9">
              <path d="M0 4.500h9M4.500 0v9" stroke="#555" strokeWidth="2" />
            </svg>
          </button>
        </ZoomCell>
        <StatusCell>192%</StatusCell>
      </StatusBar>
    </Window>
  );
}

/* horizontal ruler: 1cm is 72.56px at this zoom, zero sits at x = 139 */
function Ruler() {
  const zero = 139;
  const cm = 72.56;
  const marks = [];
  for (let i = -19; i <= 190; i++) {
    if (i === 0) continue;
    const x = Math.floor(zero + (i * cm) / 10) + 0.5;
    if (i % 10 === 0) {
      marks.push(
        <text key={i} x={x} y="11" textAnchor="middle" fontSize="10" fontFamily="Open Sans, sans-serif" fill="#a0a0a0">
          {Math.abs(i / 10)}
        </text>
      );
    } else if (i % 5 === 0) {
      marks.push(<path key={i} d={`M${x} 5v3`} stroke="#999" />);
    } else if (Math.abs(i) < 100 || (Math.abs(i) % 10 !== 1 && Math.abs(i) % 10 !== 9)) {
      marks.push(<path key={i} d={`M${x} 6v1`} stroke="#999" />);
    }
  }
  const tabs = Array.from({ length: 23 }, (_, i) => Math.round(192 + i * 53.75) + 0.5);
  return (
    <RulerRow>
      <TabCorner>
        <svg width="8" height="8" viewBox="0 0 8 8">
          <path d="M1 1v5h6" stroke="#999" strokeWidth="2" fill="none" />
        </svg>
      </TabCorner>
      <svg width="1527" height="17" viewBox="0 0 1527 17" fill="none">
        <path d="M140 0h1247v14H140z" fill="#fff" />
        <path d="M1.500.5h138v14H1.500zM1386.500.5h138v14h-138z" fill="#fafafa" stroke="#b0b0b0" />
        {marks}
        {tabs.map((x) => (
          <path key={x} d={`M${x} 12v3M${x - 2.5} 15h5`} stroke="#999" />
        ))}
        <path d="M135.500.5h8v3l-4 4-4-4zM135.500 15.500h8v-3l-4-4-4 4zM1382.500 15.500h8v-3l-4-4-4 4z" fill="#fff" stroke="#909090" />
      </svg>
    </RulerRow>
  );
}

function Sheet() {
  return (
    <Paper>
      <p>
        B. Demand for water will incr<u>ea</u>se.
      </p>
      <p>
        C. H<u>ea</u>t the milk on the oven.
      </p>
      <p>
        D. He didn't stop until he r<u>ea</u>ched the door.
      </p>
      <Answer value="A" />
      <p />
      <p>
        3. The baby cormorant is raised by <Misspelled>Damin</Misspelled> ______.
      </p>
      <p>A. he</p>
      <p>B. him</p>
      <p>C. himself</p>
      <p>D. his</p>
      <Answer value="C" />
      <p />
      <p>4. The boy can't get up early_____ the morning because he goes to bed late_____ night.</p>
      <p>A. on; in</p>
      <p>B. at; in</p>
      <p>C. in; on</p>
    </Paper>
  );
}

const Answer = ({ value }) => (
  <AnswerLine>
    <Bracket>【</Bracket>Answer<Bracket>】</Bracket>
    {value}
  </AnswerLine>
);

const GlobalStyle = createGlobalStyle`
  * {
    box-sizing: border-box;
  }
  body {
    margin: 0;
    overflow: hidden;
    font-family: "Open Sans", "Noto Sans", sans-serif;
    font-size: 14px;
    color: #3d3d3d;
  }
  button {
    padding: 0;
    border: none;
    background: none;
    color: inherit;
    font: inherit;
  }
  svg {
    display: block;
    flex: none;
    overflow: visible;
  }
`;

const Desktop = styled.div`
  display: flex;
  flex-direction: column;
  height: 100vh;
`;

const Pointer = styled.svg`
  position: fixed;
  left: 1549px;
  top: 103px;
  width: 20px;
  height: 28px;
`;

const TopBarWrapper = styled.header`
  display: grid;
  grid-template-columns: calc(50% - 8px) auto 1fr;
  align-items: center;
  height: 27px;
  flex: none;
  padding-bottom: 2px;
  background: #131313;
  color: #e6e6e6;
`;

const TopLeft = styled.div`
  display: flex;
  gap: 38px;
  padding-left: 18px;
  font-size: 15px;
  line-height: 20px;
`;

const TopButton = styled.button`
  display: flex;
  align-items: center;
  gap: 8px;
`;

const Clock = styled.div`
  display: flex;
  align-items: center;
  gap: 18px;
`;

const TopRight = styled.div`
  display: flex;
  justify-content: flex-end;
  gap: 12px;
  padding-right: 18px;
`;

const Workspace = styled.div`
  display: flex;
  flex: 1;
  min-height: 0;
`;

const DockWrapper = styled.nav`
  display: flex;
  flex-direction: column;
  align-items: center;
  gap: 4px;
  width: 70px;
  flex: none;
  padding: 6px 0;
  background: linear-gradient(160deg, #190d14 0%, #1b0f16 75%, #28131f 100%);
`;

const DockButton = styled.button`
  position: relative;
  display: grid;
  place-items: center;
  width: 64px;
  height: 64px;
  flex: none;
  border-radius: 12px;
  background: ${(props) => (props.$active ? "#433a40" : "transparent")};
`;

const AppsButton = styled(DockButton)`
  margin-top: auto;
`;

const Dots = styled.span`
  position: absolute;
  left: 0;
  top: 0;
  bottom: 0;
  display: flex;
  flex-direction: column;
  justify-content: center;
  gap: 3px;

  & > i {
    width: 6px;
    height: 6px;
    border-radius: 50%;
    background: ${orange};
  }
`;

const DockLine = styled.hr`
  width: 48px;
  height: 1px;
  margin: -1px 0;
  flex: none;
  border: none;
  background: #cfcfcf;
`;

const Window = styled.main`
  display: flex;
  flex-direction: column;
  flex: 1;
  min-width: 0;
  background: #fafafa;
`;

const TitleBar = styled.div`
  display: grid;
  grid-template-columns: 1fr auto 1fr;
  align-items: center;
  height: 37px;
  flex: none;
  background: #ebebeb;
  border-bottom: 1px solid #b8b8b8;
`;

const Title = styled.h1`
  grid-column: 2;
  margin: 0;
  font-size: 14px;
  font-weight: 700;
`;

const WindowButtons = styled.div`
  display: flex;
  justify-content: flex-end;
  gap: 12px;
  padding-right: 7px;

  & > button {
    display: grid;
    place-items: center;
    width: 22px;
    height: 22px;
    border-radius: 50%;
    background: #dadada;
  }
`;

const MenuBar = styled.nav`
  display: flex;
  align-items: center;
  gap: 18px;
  height: 25px;
  flex: none;
  padding-left: 8px;
  border-bottom: 1px solid #dcdcdc;
`;

const StandardBar = styled.div`
  display: flex;
  align-items: center;
  height: 38px;
  flex: none;
  padding-left: 4px;
`;

const FormatBar = styled(StandardBar)`
  height: 41px;
  padding-bottom: 2px;
`;

const SplitTool = styled.div`
  display: flex;
  flex: none;
`;

const ToolButton = styled.button`
  display: grid;
  place-items: center;
  width: ${(props) => (props.$narrow ? 28 : 33)}px;
  height: 34px;
  flex: none;
  border: 1px solid ${(props) => (props.$on ? "#c2c2c2" : "transparent")};
  border-radius: 6px;
  background: ${(props) => (props.$on ? "#d6d6d6" : "transparent")};
`;

const ArrowButton = styled.button`
  display: grid;
  place-items: center;
  width: 16px;
  padding: 2px 0 0 2px;

  &::after {
    content: "";
    border: 4px solid transparent;
    border-bottom: none;
    border-top-color: ${(props) => (props.disabled ? "#b8b8b8" : "#111")};
  }
`;

const Separator = styled.span`
  width: 1px;
  height: 32px;
  margin: 0 4px 0 3px;
  flex: none;
  background: #dcdcdc;
`;

const ComboBox = styled.div`
  position: relative;
  width: ${(props) => props.$width}px;
  height: 34px;
  flex: none;

  & > select {
    width: 100%;
    height: 100%;
    padding: 0 40px 0 8px;
    appearance: none;
    border: 1px solid #c4c4c4;
    border-radius: 6px;
    background: #fff;
    color: #111;
    font: inherit;
  }
`;

const ComboArrow = styled.span`
  position: absolute;
  top: 1px;
  right: 1px;
  bottom: 1px;
  width: 35px;
  display: grid;
  place-items: center;
  border-left: 1px solid #c4c4c4;
  pointer-events: none;
`;

const ComboGap = styled.span`
  width: 8px;
  flex: none;
`;

const Main = styled.div`
  display: flex;
  flex: 1;
  min-height: 0;
`;

const Editor = styled.div`
  display: flex;
  flex-direction: column;
  flex: 1;
  min-width: 0;
`;

const RulerRow = styled.div`
  position: relative;
  display: flex;
  justify-content: center;
  height: 23px;
  flex: none;
  padding: 3px 13px 0 0;
`;

const TabCorner = styled.span`
  position: absolute;
  left: 7px;
  top: 7px;
`;

const Canvas = styled.div`
  display: grid;
  grid-template-columns: 1fr 13px;
  justify-items: center;
  flex: 1;
  min-height: 0;
  overflow: hidden;
`;

/* scrolled part of the page, the first line is half hidden */
const Paper = styled.article`
  width: 1527px;
  margin-top: -28px;
  padding: 0 140px;
  background: #fff;
  border: solid #999;
  border-width: 0 1px;
  box-shadow: 0 0 4px rgba(0, 0, 0, 0.25);
  color: #000;
  font-family: "Liberation Serif", "Noto Sans CJK SC", serif;
  font-size: 27px;
  font-style: italic;
  line-height: 55px;

  & > p {
    min-height: 55px;
    margin: 0;
  }

  & u {
    text-decoration-thickness: 2px;
    text-underline-offset: 4px;
  }
`;

const AnswerLine = styled.p`
  line-height: 61px;
`;

const Bracket = styled.span`
  font-family: "Noto Sans CJK SC", sans-serif;
  font-style: normal;
  font-weight: 700;
  line-height: 1;
`;

const Misspelled = styled.span`
  text-decoration: underline wavy #e0202a 1px;
  text-underline-offset: 2px;
`;

const ScrollTrack = styled.div`
  width: 13px;
  padding: 110px 3px 0 4px;
`;

const ScrollThumb = styled.div`
  height: 110px;
  border-radius: 3px;
  background: #8a8a8a;
`;

const Sidebar = styled.aside`
  position: relative;
  display: flex;
  flex-direction: column;
  align-items: center;
  gap: 8px;
  width: 59px;
  flex: none;
  padding: 2px 0 0 1px;
  border-left: 1px solid #b8b8b8;
`;

const SideHandle = styled.button`
  position: absolute;
  left: -1px;
  top: calc(50% - 38px);
  display: grid;
  place-items: center;
  width: 7px;
  height: 73px;
  background: #9a9a9a;
`;

const SideButton = styled(ToolButton)`
  width: 36px;
`;

const SideMenu = styled(SideButton)`
  margin-bottom: 2px;
`;

const StatusBar = styled.footer`
  display: grid;
  grid-template-columns: 30px 261fr 362fr 308fr 279fr 68px 29px 29px 216fr 77px 142px 49px;
  align-items: center;
  height: 21px;
  flex: none;
  border-top: 1px solid #b8b8b8;
  font-size: 12px;
`;

const StatusCell = styled.div`
  display: flex;
  align-items: center;
  justify-content: ${(props) => (props.$center ? "center" : "flex-start")};
  height: 16px;
  padding-left: ${(props) => (props.$center ? 2 : 8)}px;
  white-space: nowrap;

  &:not(:first-child) {
    border-left: 1px solid #dcdcdc;
  }
`;

const ZoomCell = styled(StatusCell)`
  gap: 5px;

  & > input {
    width: 98px;
    height: 12px;
    margin: 0;
    appearance: none;
    background:
      linear-gradient(#a6a6a6, #a6a6a6) 31px 2px / 2px 8px no-repeat,
      linear-gradient(#a6a6a6, #a6a6a6) 47px 2px / 2px 8px no-repeat,
      linear-gradient(#a6a6a6, #a6a6a6) 0 5px / 100% 2px no-repeat;
  }

  & > input::-webkit-slider-thumb {
    width: 9px;
    height: 9px;
    appearance: none;
    border: 1px solid #444;
    border-radius: 50%;
    background: #fff;
  }
`;
